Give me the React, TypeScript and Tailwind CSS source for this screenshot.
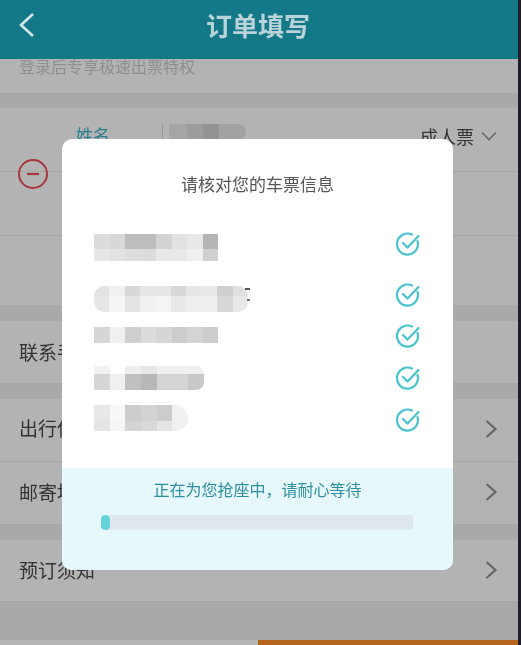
import React from "react";

const font = "font-['Noto_Sans_CJK_SC','Noto_Sans',sans-serif]";

function Chevron() {
  return (
    <svg className="-mt-[2px]" width="14" height="20" viewBox="0 0 14 20" fill="none" stroke="#666666" strokeWidth="2.2">
      <path d="M2.5 2l9 8-9 8" />
    </svg>
  );
}

function Check() {
  return (
    <svg width="26" height="26" viewBox="0 0 26 26" fill="none" stroke="#45c3cf" strokeWidth="2.2" strokeLinecap="round" strokeLinejoin="round">
      <path d="M22.5 10A10.5 10.5 0 1 1 17 3.6" />
      <path d="M8 12l4.5 4.5L23.5 5" />
    </svg>
  );
}

function Row({ label, h, pt, plain }: { label: string; h: string; pt?: string; plain?: boolean }) {
  return (
    <div className={`flex items-center justify-between pl-[19px] pr-[23px] border-b border-[#a6a6a6] ${h}`}>
      <span className={`text-[19px] text-[#333333] ${pt ?? ""}`}>{label}</span>
      {!plain && <Chevron />}
    </div>
  );
}

const blurRows: { w: string; h: string; mt: string; round: string; top: string[]; bottom: string[]; topH: string }[] = [
  {
    w: "w-[124px]", h: "h-[27px]", mt: "mt-0", round: "rounded-none", topH: "h-[15px]",
    top: ["#dcdcdc", "#d8d8d8", "#bdbdbd", "#bdbdbd", "#d3d3d3", "#e2e2e2", "#e8e8e8", "#b5b5b5"],
    bottom: ["#e6e6e6", "#e2e2e2", "#dedede", "#dcdcdc", "#e8e8e8", "#e8e8e8", "#efefef", "#cfcfcf"],
  },
  {
    w: "w-[154px]", h: "h-[26px]", mt: "mt-[25px]", round: "rounded-[10px]", topH: "h-[10px]",
    top: ["#e3e3e3", "#f0f0f0", "#d8d8d8", "#e6e6e6", "#e6e6e6", "#d8d8d8", "#e6e6e6", "#e8e8e8", "#cfcfcf", "#e0e0e0"],
    bottom: ["#e6e6e6", "#f5f5f5", "#e4e4e4", "#f0f0f0", "#f4f4f4", "#e8e8e8", "#eeeeee", "#eeeeee", "#d8d8d8", "#e8e8e8"],
  },
  {
    w: "w-[124px]", h: "h-[16px]", mt: "mt-[15px]", round: "rounded-none", topH: "h-[8px]",
    top: ["#d6d6d6", "#f0f0f0", "#cfcfcf", "#dcdcdc", "#d6d6d6", "#cccccc", "#d4d4d4", "#cccccc"],
    bottom: ["#d6d6d6", "#f0f0f0", "#cfcfcf", "#dcdcdc", "#d6d6d6", "#cccccc", "#d4d4d4", "#cccccc"],
  },
  {
    w: "w-[110px]", h: "h-[24px]", mt: "mt-[23px]", round: "rounded-r-[8px]", topH: "h-[8px]",
    top: ["#f2f2f2", "#ffffff", "#eeeeee", "#e6e6e6", "#f0f0f0", "#f0f0f0", "#f0f0f0"],
    bottom: ["#d6d6d6", "#f0f0f0", "#c0c0c0", "#b8b8b8", "#d4d4d4", "#d4d4d4", "#c8c8c8"],
  },
  {
    w: "w-[94px]", h: "h-[26px]", mt: "mt-[15px]", round: "rounded-r-[14px]", topH: "h-[16px]",
    top: ["#e8e8e8", "#f8f8f8", "#cccccc", "#d2d2d2", "#cccccc", "#f0f0f0"],
    bottom: ["#e4e4e4", "#f6f6f6", "#d4d4d4", "#d8d8d8", "#e6e6e6", "#f0f0f0"],
  },
];
const checkGaps = ["mt-0", "mt-[25px]", "mt-[15px]", "mt-[16px]", "mt-[16px]"];

export default function App() {
  return (
    <div className={`relative w-[521px] h-[645px] overflow-hidden bg-[#b3b3b3] ${font}`}>
      <div className="blur-[0.4px]">
        <div className="h-[59px]" />
        <div className="h-[35px] pl-[19px] border-b border-[#a8a8a8] overflow-hidden">
          <span className="block -mt-[5px] text-[16px] text-[#8f8f8f]">登录后专享极速出票特权</span>
        </div>
        <div className="h-[14px] bg-[#a9a9a9]" />

        <div className="relative h-[197px]">
          <div className="h-[64px] border-b border-[#a6a6a6] flex">
            <div className="w-[62px]" />
            <div className="w-[100px] pt-[13px] pl-[14px] text-[17px] leading-[28px] text-[#2a7f8c]">姓名</div>
            <div className="flex-1 pt-[16px] flex justify-between pr-[24px]">
              <div className="flex h-[16px] w-[84px] rounded-r-lg overflow-hidden border-l border-[#999999] pl-[6px]">
                <div className="w-[18px] bg-[#a6a6a6]" />
                <div className="w-[16px] bg-[#9c9c9c]" />
                <div className="w-[16px] bg-[#939393]" />
                <div className="flex-1 bg-[#a2a2a2]" />
              </div>
              <div className="flex items-center h-[28px] -mt-[2px] gap-[7px]">
                <span className="text-[18px] text-[#333333]">成人票</span>
                <svg width="16" height="10" viewBox="0 0 16 10" fill="none" stroke="#6a6a6a" strokeWidth="1.6"><path d="M1 1.5l7 7 7-7" /></svg>
              </div>
            </div>
          </div>
          <div className="h-[64px] border-b border-[#a6a6a6]" />
          <svg className="absolute left-[18px] top-[51px]" width="30" height="30" viewBox="0 0 30 30" fill="none" stroke="#a8343f" strokeWidth="2">
            <circle cx="15" cy="15" r="14" />
            <path d="M9 15h12" strokeWidth="2.2" />
          </svg>
        </div>

        <div className="h-[16px] bg-[#a9a9a9]" />
        <Row label="联系手机" h="h-[63px]" plain />
        <div className="h-[15px] bg-[#a9a9a9]" />
        <Row label="出行保障" h="h-[63px]" pt="-mt-[3px]" />
        <Row label="邮寄地址" h="h-[63px]" pt="-mt-[2px]" />
        <div className="h-[15px] bg-[#a9a9a9]" />
        <Row label="预订须知" h="h-[62px]" />
        <div className="h-[38px] bg-[#a9a9a9]" />
        <div className="h-[5px] pl-[258px] bg-[#b5b5b5]">
          <div className="h-full bg-[#b5651d]" />
        </div>
      </div>

      <header className="absolute inset-x-0 top-0 h-[59px] bg-[#137888] flex items-center justify-center blur-[0.4px]">
        <svg className="absolute left-[18px] top-[12px]" width="17" height="26" viewBox="0 0 17 26" fill="none" stroke="#d5e6e9" strokeWidth="2.6">
          <path d="M15 2L3 13l12 11" />
        </svg>
        <span className="-ml-[5px] -mt-[10px] text-[26px] leading-[34px] font-bold text-[#b9d3d8]">订单填写</span>
      </header>

      <div className="absolute left-[62px] top-[139px] w-[391px] h-[431px] rounded-[10px] bg-white overflow-hidden flex flex-col">
        <div className="h-[329px] blur-[0.4px]">
          <p className="pt-[33px] text-center text-[17px] leading-[24px] text-[#555555]">请核对您的车票信息</p>
          <div className="flex justify-between mt-[38px] pl-[32px] pr-[32px]">
            <div className="relative flex flex-col">
              {blurRows.map((r, i) => (
                <div key={i} className={`flex flex-col overflow-hidden ${r.w} ${r.mt} ${r.h} ${r.round}`}>
                  <div className={`flex ${r.topH}`}>
                    {r.top.map((c, j) => (
                      <div key={j} className="flex-1" style={{ background: c }} />
                    ))}
                  </div>
                  <div className="flex flex-1">
                    {r.bottom.map((c, j) => (
                      <div key={j} className="flex-1" style={{ background: c }} />
                    ))}
                  </div>
                </div>
              ))}
              <div className="absolute left-[151px] top-[54px] w-[5px] h-[2px] bg-[#555555]" />
              <div className="absolute left-[153px] top-[65px] w-[3px] h-[2px] bg-[#777777]" />
            </div>
            <div className="flex flex-col -mt-[3px]">
              {checkGaps.map((g, i) => (
                <div key={i} className={g}><Check /></div>
              ))}
            </div>
          </div>
        </div>
        <div className="flex-1 bg-[#e6f8fb] flex flex-col items-center blur-[0.3px]">
          <p className="mt-[10px] text-[16px] leading-[22px] text-[#2f8fa0]">正在为您抢座中，请耐心等待</p>
          <div className="mt-[15px] -ml-[2px] w-[312px] h-[15px] rounded-[3px] bg-[#dfe8ed]">
            <div className="w-[9px] h-[15px] rounded-full bg-[#63d3dc]" />
          </div>
        </div>
      </div>

      <div className="absolute right-0 inset-y-0 w-[3px] bg-[#1e1e26]" />
    </div>
  );
}
